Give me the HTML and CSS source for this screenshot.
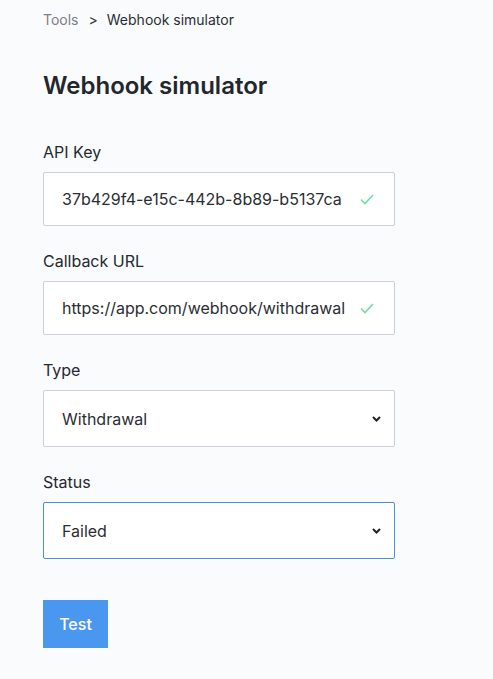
FILE: index.html
```html
<!DOCTYPE html>
<html>
<head>
<meta charset="utf-8">
<link rel="stylesheet" href="styles.css">
</head>
<body>
<div class="page">
  <nav class="crumbs">
    <span class="crumb-muted">Tools</span>
    <span class="crumb-sep">&gt;</span>
    <span class="crumb-current">Webhook simulator</span>
  </nav>
  <h1 class="title">Webhook simulator</h1>
  <div class="field first">
    <div class="label">API Key</div>
    <div class="box input">
      <span class="value">37b429f4-e15c-442b-8b89-b5137ca</span>
      <svg class="check" width="14" height="11" viewBox="0 0 14 11"><path d="M1 5.5 L5 9.5 L13 1" fill="none" stroke="#6fdcab" stroke-width="1.6"/></svg>
    </div>
  </div>
  <div class="field">
    <div class="label">Callback URL</div>
    <div class="box input">
      <span class="value">https://app.com/webhook/withdrawal</span>
      <svg class="check" width="14" height="11" viewBox="0 0 14 11"><path d="M1 5.5 L5 9.5 L13 1" fill="none" stroke="#6fdcab" stroke-width="1.6"/></svg>
    </div>
  </div>
  <div class="field">
    <div class="label">Type</div>
    <div class="box select">
      <span class="value">Withdrawal</span>
      <svg class="chev" width="9" height="6" viewBox="0 0 9 6"><path d="M1 1 L4.5 4.5 L8 1" fill="none" stroke="#1f2329" stroke-width="2"/></svg>
    </div>
  </div>
  <div class="field">
    <div class="label">Status</div>
    <div class="box select focus">
      <span class="value">Failed</span>
      <svg class="chev" width="9" height="6" viewBox="0 0 9 6"><path d="M1 1 L4.5 4.5 L8 1" fill="none" stroke="#1f2329" stroke-width="2"/></svg>
    </div>
  </div>
  <button class="btn">Test</button>
</div>
</body>
</html>
```
FILE: styles.css
```css
html, body {
  margin: 0;
  padding: 0;
  background: #fafbfd;
}
body {
  font-family: Inter, "Noto Sans", sans-serif;
  color: #25292f;
}
.page {
  padding: 11px 0 0 43px;
  width: 352px;
}
.crumbs {
  display: flex;
  align-items: center;
  font-size: 14px;
  line-height: 18px;
}
.crumb-muted { color: #7a808a; }
.crumb-sep { margin: 0 9px 0 10px; color: #33373d; }
.crumb-current { color: #2a2e34; }
.title {
  margin: 41px 0 0;
  font-size: 24px;
  line-height: 32px;
  font-weight: 600;
  color: #23272d;
}
.field {
  margin-top: 24px;
}
.field.first { margin-top: 39px; }
.label {
  font-size: 16px;
  line-height: 22px;
  color: #25292f;
  margin-bottom: 9px;
}
.box {
  box-sizing: border-box;
  background: #fff;
  border: 1px solid #ccd0d7;
  border-radius: 2px;
  display: flex;
  align-items: center;
  justify-content: space-between;
  padding: 0 20px 0 18px;
  font-size: 16px;
  color: #2a2e34;
}
.input { height: 54px; }
.select { height: 57px; padding-right: 13px; }
.focus { border-color: #4a90e2; }
.value { white-space: nowrap; }
.check { flex: none; }
.chev { flex: none; }
.btn {
  margin-top: 41px;
  width: 65px;
  height: 48px;
  border: 0;
  border-radius: 0;
  background: #4a97ef;
  color: #fff;
  font-family: Inter, "Noto Sans", sans-serif;
  font-size: 16px;
  font-weight: 500;
  padding: 0;
}
```
